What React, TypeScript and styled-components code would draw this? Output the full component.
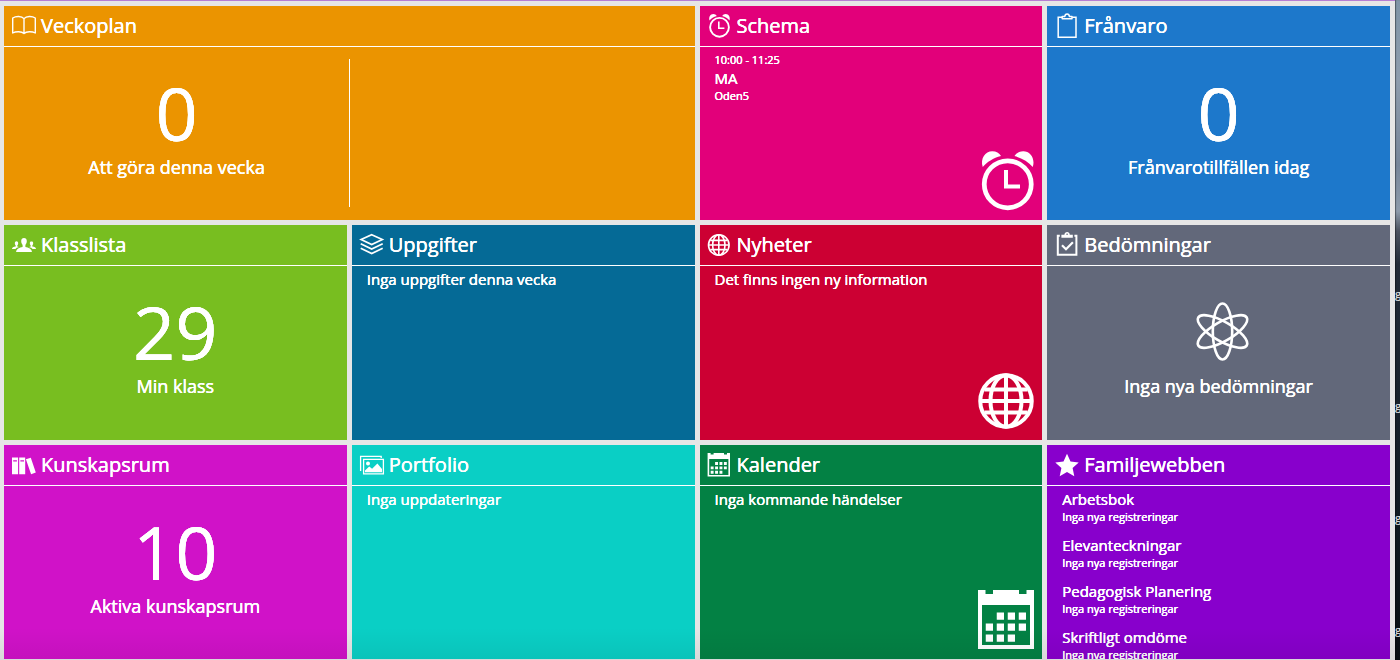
import React from "react";
import styled, { createGlobalStyle } from "styled-components";

const GlobalStyle = createGlobalStyle`
  *, *::before, *::after { box-sizing: border-box; }
  body {
    margin: 0;
    font-family: "Open Sans", "Noto Sans", sans-serif;
    color: #fff;
    background: #e6e6e6;
  }
`;

const Desktop = styled.div`
  display: flex;
  height: 100vh;
  overflow: hidden;
`;

const Board = styled.main`
  position: relative;
  flex: 1;
  min-width: 0;
  display: grid;
  grid-template-columns: repeat(4, minmax(0, 1fr));
  grid-template-rows: repeat(3, minmax(0, 1fr));
  gap: 5px;
  padding: 5px 5px 1px 4px;
  border-top: 1px solid #b57ed2;
  background: #e6e6e6;
  text-shadow: 0 0 0 #fff, 0 0 0 #fff;

  &::after {
    content: "";
    position: absolute;
    inset: auto 0 0 0;
    height: 32px;
    background: linear-gradient(rgba(0, 0, 0, 0), rgba(0, 0, 0, 0.06));
    pointer-events: none;
  }
`;

const Wallpaper = styled.aside`
  width: 5px;
  overflow: hidden;
  display: flex;
  flex-direction: column;
  padding-top: 284px;
  background: linear-gradient(#7f94a6 0, #8e9dae 12%, #77869a 25%, #8d9bab 32%, #4b5360 35%, #232c38 40%, #18222d 60%, #101a22 80%, #080d12 100%);
  box-shadow: inset 1px 0 1px rgba(0, 0, 0, 0.4);
`;

const FileName = styled.span`
  flex: none;
  height: 112px;
  font-size: 11px;
  line-height: 20px;
  font-weight: 600;
  color: #d8d8d8;
`;

const Tile = styled.section<{ $color: string; $wide?: boolean }>`
  display: flex;
  flex-direction: column;
  min-height: 0;
  overflow: hidden;
  grid-column: ${(p) => (p.$wide ? "span 2" : "auto")};
  background: ${(p) => p.$color};
`;

const TileHeader = styled.h2`
  flex: none;
  margin: 0;
  border-bottom: 1px solid #fff;
  font-size: 20px;
  line-height: 40px;
  font-weight: 400;
`;

const TileLink = styled.a`
  display: flex;
  align-items: center;
  gap: 5px;
  height: 40px;
  padding-left: 8px;
  color: inherit;
  text-decoration: none;
  white-space: nowrap;
`;

const Glyph = styled.svg<{ $size: number }>`
  flex: none;
  display: block;
  width: ${(p) => p.$size}px;
  height: ${(p) => p.$size}px;
  overflow: visible;
`;

const Summary = styled.div`
  flex: 1;
  display: flex;
  flex-direction: column;
  align-items: center;
  padding-top: 28px;
`;

const Figure = styled.div`
  display: flex;
  align-items: center;
  height: 76px;
  font-size: 74px;
  line-height: 74px;
`;

const Caption = styled.div`
  font-size: 18px;
  line-height: 32px;
  white-space: nowrap;
`;

const Halves = styled.div`
  flex: 1;
  display: grid;
  grid-template-columns: 1fr 1fr;
`;

const Half = styled.div<{ $ruled?: boolean }>`
  display: flex;
  margin: ${(p) => (p.$ruled ? "12px 0 13px" : "0")};
  border-left: ${(p) => (p.$ruled ? "1px solid #fff" : "0")};
`;

const Details = styled.div`
  flex: 1;
  min-height: 0;
  display: flex;
  flex-direction: column;
  justify-content: space-between;
  padding: 4px 3px 9px 15px;
`;

const Entry = styled.div`
  margin-bottom: 10px;
`;

const Line = styled.p<{ $small?: boolean }>`
  margin: 0;
  font-size: ${(p) => (p.$small ? 11 : 15)}px;
  line-height: 18px;
  white-space: nowrap;
`;

const Corner = styled.div`
  align-self: flex-end;
`;

type IconName =
  | "book" | "alarm" | "clipboard" | "people" | "layers" | "globe"
  | "check" | "books" | "pictures" | "calendar" | "star";

const line = { fill: "none", stroke: "currentColor" } as const;
const solid = { fill: "currentColor" } as const;

const drawings: Record<IconName, React.ReactNode> = {
  book: (
    <path {...line} strokeWidth="1.4" strokeLinejoin="round"
      d="M12 4.600C9.600 1.900 4 1.900.7 4v15c3.300-1.800 8.900-1.800 11.300.6 2.400-2.400 8-2.400 11.300-.6V4C20 1.900 14.400 1.900 12 4.600zM12 4.600v15" />
  ),
  alarm: (
    <>
      <circle {...line} cx="11.500" cy="13.300" r="9.400" strokeWidth="1.900" />
      <path {...line} strokeWidth="1.600" d="M10.800 7.600v6.600h5.600" />
      <path {...solid} d="M1.500 6.400C.4 3 2.500.1 5.300.1c1.600 0 2.800.8 3.500 1.900C5.700 2.800 3.200 4.400 1.500 6.400z" />
      <path {...solid} d="M21.500 6.400C22.600 3 20.500.1 17.700.1c-1.600 0-2.800.8-3.500 1.900 3.100.8 5.600 2.400 7.300 4.400z" />
    </>
  ),
  clipboard: (
    <>
      <path {...line} strokeWidth="1.500" d="M7 3.200H3.200v20H21v-20h-3.800" />
      <path {...line} strokeWidth="1.500" strokeLinejoin="round" d="M7.200 4.800V2.400h2.600C10 .7 10.900 0 12.100 0s2.100.7 2.300 2.400H17v2.400z" />
    </>
  ),
  people: (
    <>
      <path {...solid} d="M12 5c1.700 0 2.800 1.200 2.800 3.100 0 1.600-.6 3-1.400 3.800v2c3 .7 6.500 1.700 6.500 5.100H4.100c0-3.400 3.500-4.400 6.500-5.100v-2c-.8-.8-1.400-2.200-1.400-3.800C9.200 6.200 10.300 5 12 5z" />
      <path {...solid} d="M4.500 8.200c1 0 1.700.8 1.700 2 0 1-.4 1.800-.9 2.300v1.100l1.600.4c-1.700.5-2.900 1.100-3.500 2H0c0-1.500 1.500-2 3.700-2.400v-1.100c-.5-.5-.9-1.300-.9-2.300 0-1.200.7-2 1.700-2z" />
      <path {...solid} d="M19.500 8.200c-1 0-1.700.8-1.700 2 0 1 .4 1.800.9 2.300v1.100l-1.600.4c1.700.5 2.900 1.100 3.500 2H24c0-1.500-1.500-2-3.700-2.400v-1.100c.5-.5.9-1.300.9-2.300 0-1.200-.7-2-1.700-2z" />
    </>
  ),
  layers: (
    <path {...line} strokeWidth="1.700"
      d="M11.700 1.700l10.600 4.900-10.600 4.900L1.100 6.600zM.7 10.800l11 5.200 11-5.200M.7 15.300l11 5.200 11-5.200" />
  ),
  globe: (
    <g {...line} strokeWidth="1.600">
      <circle cx="10.800" cy="12" r="10.300" />
      <path d="M10.800 1.800v20.400M.6 12H21M2.200 7.400h17.200M2.200 16.600h17.200" />
      <ellipse cx="10.800" cy="12" rx="6.200" ry="10.300" />
    </g>
  ),
  check: (
    <>
      <path {...line} strokeWidth="2" d="M4.800 2.700H2.800v19.100h18.600V2.700h-2" />
      <path {...solid} d="M6.400 4.800V1.700h3C9.600 0 10.600-.9 12.100-.9s2.500.9 2.700 2.600h3v3.100z" />
      <circle cx="12.100" cy="1.200" r=".8" fill="#62687a" />
      <path {...line} strokeWidth="2.200" d="M7 12.200l4 4 6.900-7" />
    </>
  ),
  books: (
    <path {...solid} fillRule="evenodd"
      d="M0 4.500h6.100v16.800H0zM1.200 7.200v1.200h3.700V7.200zM7.200 4.500h6v16.800h-6zM8.400 7.200v1.200h3.600V7.200zM13.900 6.200l4.900-1.500 5 14.900-4.700 1.600z" />
  ),
  pictures: (
    <>
      <path {...line} strokeWidth="1.300" d="M.6 18V3.400h20.600V5" />
      <path {...line} strokeWidth="1.300" d="M3.600 6.400h19.800v14.400H3.600z" />
      <circle {...solid} cx="8" cy="10.600" r="2" />
      <path {...solid} d="M5 19.300v-1.800l4.200-4 2.900 2.300 5.300-5.400 4.600 5.600v3.300z" />
    </>
  ),
  calendar: (
    <g transform="translate(-.4 0)">
      <path {...solid} fillRule="evenodd" d="M0 0h3v1.600h3V0h10.400v1.600h3V0h3v23.600H0zM1.600 6v16h19.200V6z" />
      <path {...solid}
        d="M7.500 9h2.900v2.900H7.500zM11.900 9h2.900v2.900h-2.900zM16.300 9h2.900v2.900h-2.900zM3.100 13.400H6v2.900H3.100zM7.500 13.400h2.900v2.900H7.500zM11.900 13.400h2.900v2.900h-2.900zM16.300 13.400h2.900v2.900h-2.900zM3.100 17.800H6v2.900H3.100zM7.500 17.800h2.900v2.900H7.500zM11.900 17.800h2.900v2.900h-2.900z" />
    </g>
  ),
  star: (
    <path {...solid} d="M12 .8l3.500 7.700 8.200.9-6.100 5.600 1.700 8.200L12 19l-7.300 4.200L6.400 15 .3 9.400l8.200-.9z" />
  ),
};

function Icon({ name, size = 24 }: { name: IconName; size?: number }) {
  return (
    <Glyph $size={size} viewBox="0 0 24 24" aria-hidden="true">
      {drawings[name]}
    </Glyph>
  );
}

function Atom() {
  return (
    <Glyph $size={60} viewBox="0 0 60 60" aria-hidden="true">
      <g {...line} strokeWidth="2.600">
        {[0, 60, 120].map((angle) => (
          <ellipse key={angle} cx="33.500" cy="29.500" rx="9.700" ry="28" transform={`rotate(${angle} 33.500 29.500)`} />
        ))}
      </g>
    </Glyph>
  );
}

interface PanelProps {
  title: string;
  icon: IconName;
  color: string;
  wide?: boolean;
  children: React.ReactNode;
}

function Panel({ title, icon, color, wide, children }: PanelProps) {
  return (
    <Tile $color={color} $wide={wide}>
      <TileHeader>
        <TileLink href="#">
          <Icon name={icon} />
          {title}
        </TileLink>
      </TileHeader>
      {children}
    </Tile>
  );
}

function Count({ value, label }: { value: React.ReactNode; label: string }) {
  return (
    <Summary>
      <Figure>{value}</Figure>
      <Caption>{label}</Caption>
    </Summary>
  );
}

const familyEntries = ["Arbetsbok", "Elevanteckningar", "Pedagogisk Planering", "Skriftligt omdöme"];

export default function App() {
  return (
    <Desktop>
      <GlobalStyle />
      <Board>
        <Panel title="Veckoplan" icon="book" color="#eb9400" wide>
          <Halves>
            <Half>
              <Count value="0" label="Att göra denna vecka" />
            </Half>
            <Half $ruled />
          </Halves>
        </Panel>
        <Panel title="Schema" icon="alarm" color="#e2007a">
          <Details>
            <div>
              <Line $small>10:00 - 11:25</Line>
              <Line>MA</Line>
              <Line $small>Oden5</Line>
            </div>
            <Corner><Icon name="alarm" size={60} /></Corner>
          </Details>
        </Panel>
        <Panel title="Frånvaro" icon="clipboard" color="#1d78cb">
          <Count value="0" label="Frånvarotillfällen idag" />
        </Panel>
        <Panel title="Klasslista" icon="people" color="#78be20">
          <Count value="29" label="Min klass" />
        </Panel>
        <Panel title="Uppgifter" icon="layers" color="#056a96">
          <Details>
            <Line>Inga uppgifter denna vecka</Line>
          </Details>
        </Panel>
        <Panel title="Nyheter" icon="globe" color="#cc0033">
          <Details>
            <Line>Det finns ingen ny information</Line>
            <Corner><Icon name="globe" size={60} /></Corner>
          </Details>
        </Panel>
        <Panel title="Bedömningar" icon="check" color="#62687a">
          <Count value={<Atom />} label="Inga nya bedömningar" />
        </Panel>
        <Panel title="Kunskapsrum" icon="books" color="#d012c8">
          <Count value="10" label="Aktiva kunskapsrum" />
        </Panel>
        <Panel title="Portfolio" icon="pictures" color="#0acfc5">
          <Details>
            <Line>Inga uppdateringar</Line>
          </Details>
        </Panel>
        <Panel title="Kalender" icon="calendar" color="#038144">
          <Details>
            <Line>Inga kommande händelser</Line>
            <Corner><Icon name="calendar" size={60} /></Corner>
          </Details>
        </Panel>
        <Panel title="Familjewebben" icon="star" color="#8800cc">
          <Details>
            <div>
              {familyEntries.map((name) => (
                <Entry key={name}>
                  <Line>{name}</Line>
                  <Line $small>Inga nya registreringar</Line>
                </Entry>
              ))}
            </div>
          </Details>
        </Panel>
      </Board>
      <Wallpaper>
        <FileName>g</FileName>
        <FileName>g</FileName>
        <FileName>g</FileName>
        <FileName>g</FileName>
      </Wallpaper>
    </Desktop>
  );
}
